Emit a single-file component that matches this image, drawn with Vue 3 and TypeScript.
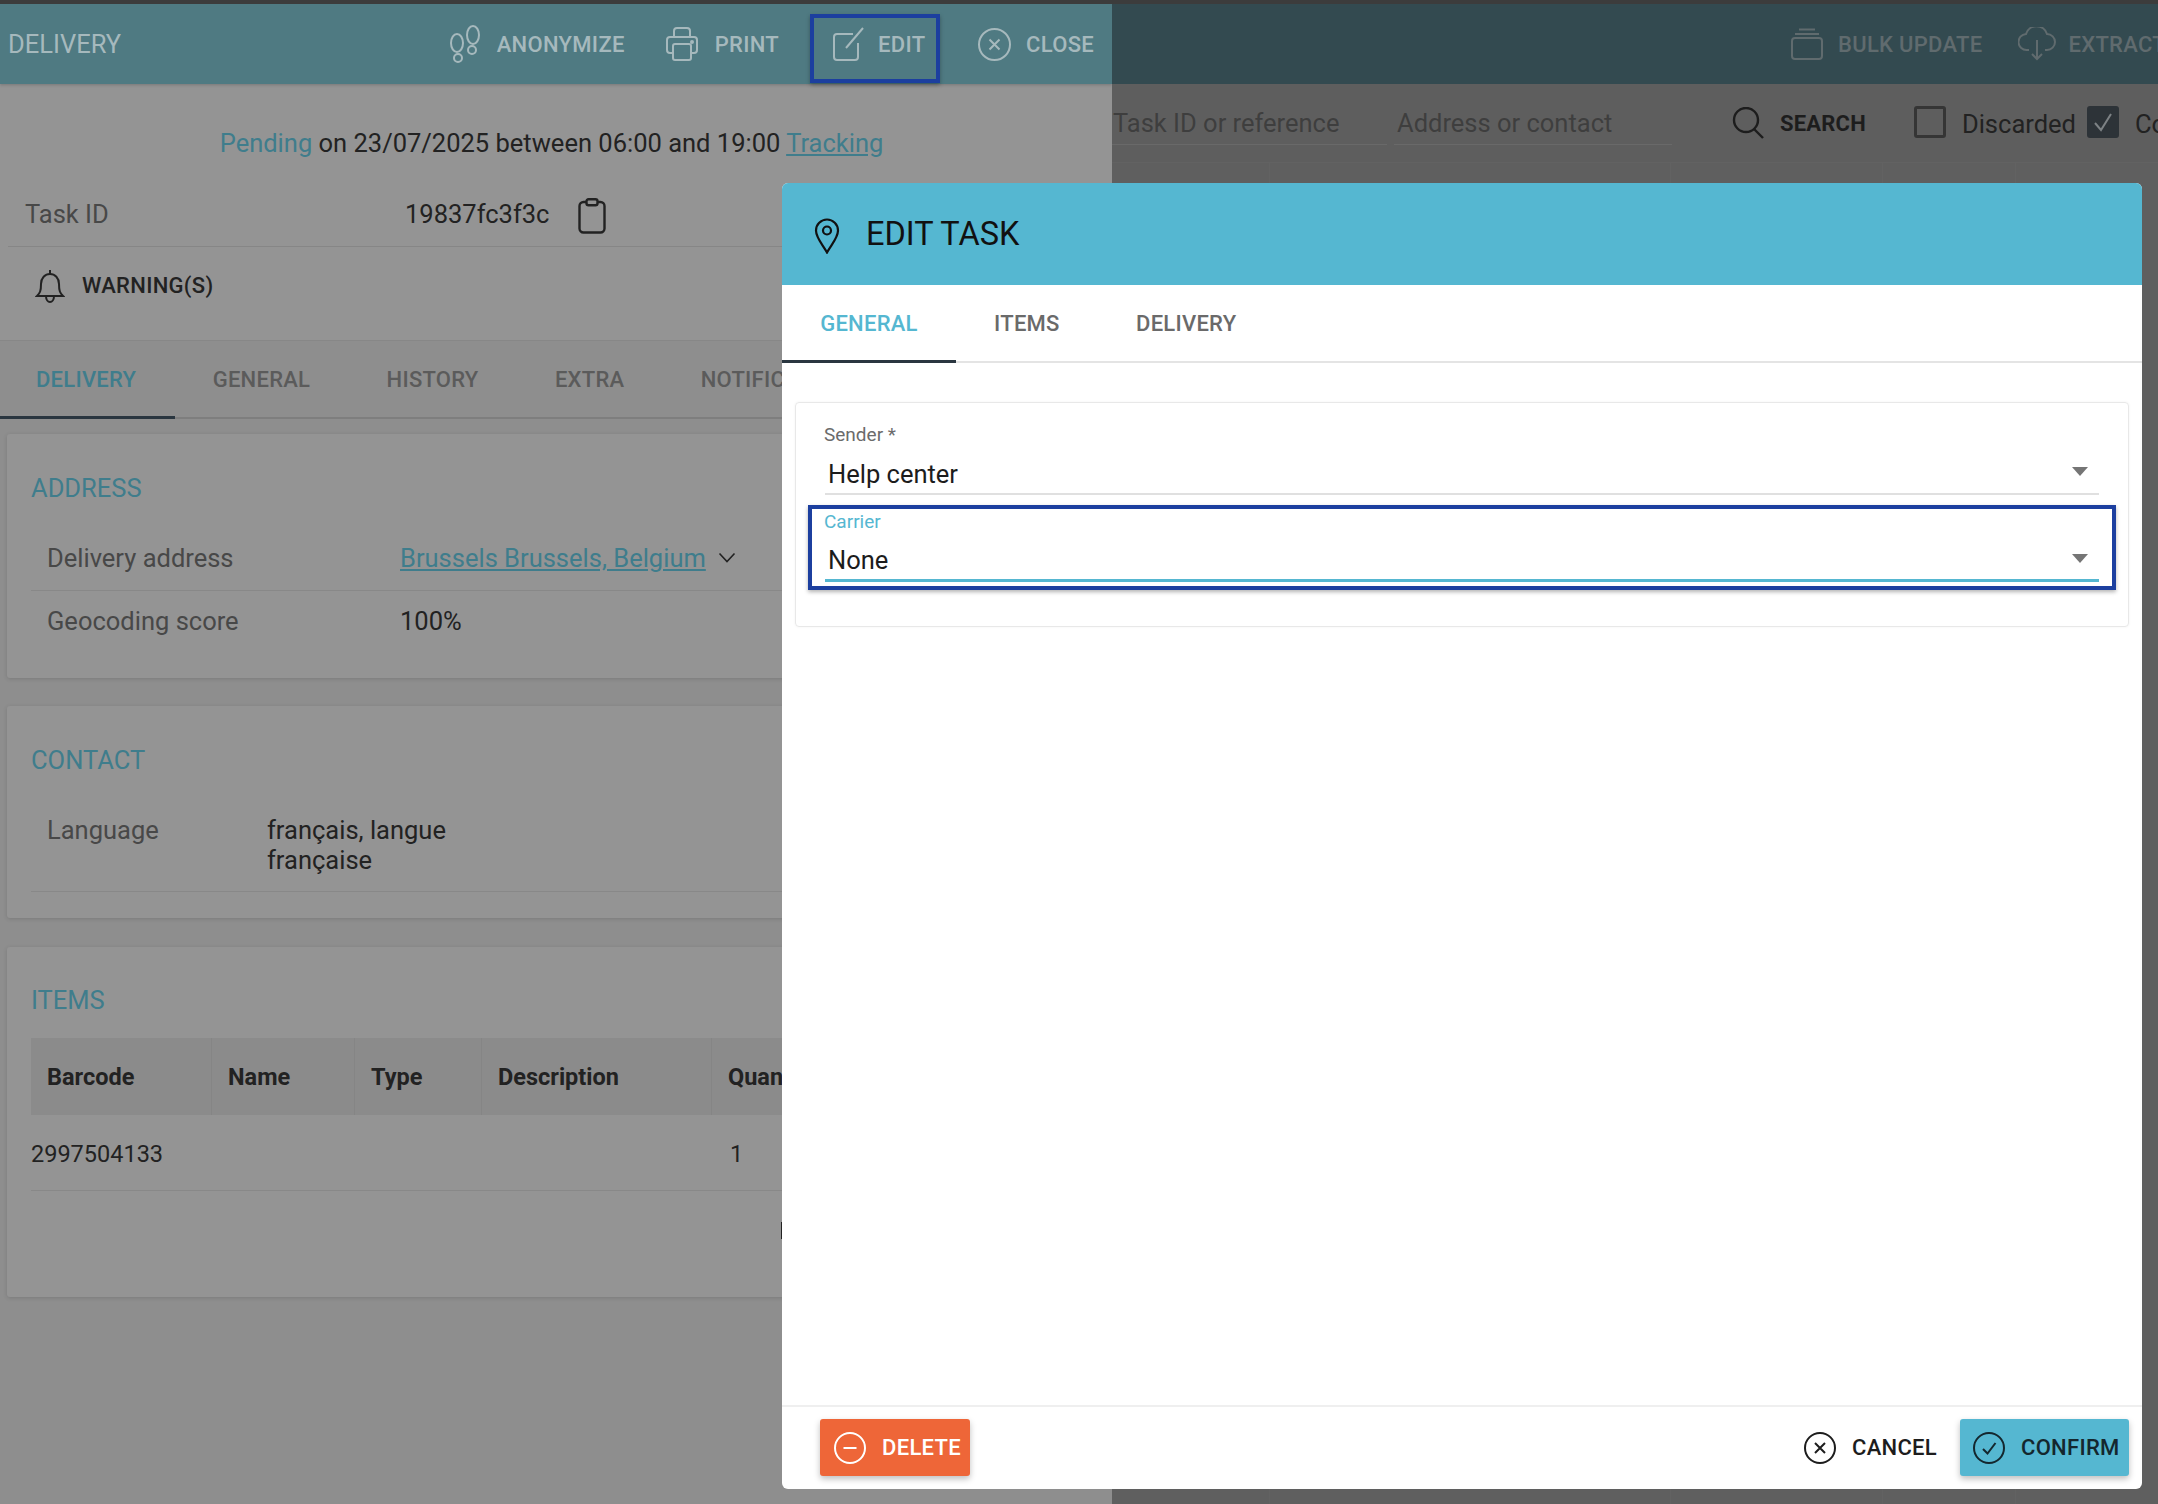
<script setup lang="ts">
interface Row {
  label: string
  value: string
}

const detailTabs = ['DELIVERY', 'GENERAL', 'HISTORY', 'EXTRA', 'NOTIFICATIONS']
const modalTabs = ['GENERAL', 'ITEMS', 'DELIVERY']
const tableHead = [
  { name: 'Barcode', width: 181 },
  { name: 'Name', width: 143 },
  { name: 'Type', width: 127 },
  { name: 'Description', width: 230 },
  { name: 'Quantity', width: 120 },
]
const filterColumns = [1269, 1670, 1882, 2015]
const address: Row = { label: 'Delivery address', value: 'Brussels Brussels, Belgium' }
</script>

<template>
  <div class="page">
    <div class="strip"></div>
    <div class="columns">
      <section class="detail">
        <header class="bar detail-bar">
          <span class="bar-title">DELIVERY</span>
          <div class="tools">
            <span class="tool tool-anon">
              <svg width="34" height="38" viewBox="0 0 34 38" fill="none" stroke="currentColor" stroke-width="2">
                <ellipse cx="9" cy="18" rx="6" ry="9" />
                <ellipse cx="10" cy="33" rx="4" ry="4" />
                <ellipse cx="25" cy="10" rx="6" ry="9" />
                <ellipse cx="24" cy="25" rx="4" ry="4" />
              </svg>
              ANONYMIZE
            </span>
            <span class="tool tool-print">
              <svg width="32" height="34" viewBox="0 0 32 34" fill="none" stroke="currentColor" stroke-width="2">
                <path d="M8 10V4a3 3 0 0 1 3-3h10a3 3 0 0 1 3 3v6" />
                <path d="M7 26H4a3 3 0 0 1-3-3V13a3 3 0 0 1 3-3h24a3 3 0 0 1 3 3v10a3 3 0 0 1-3 3h-3" />
                <rect x="7" y="17" width="18" height="16" rx="2" />
                <circle cx="26" cy="15" r="1" fill="currentColor" />
              </svg>
              PRINT
            </span>
            <span class="tool tool-edit">
              <svg width="32" height="34" viewBox="0 0 32 34" fill="none" stroke="currentColor" stroke-width="2">
                <path d="M20 7H4a3 3 0 0 0-3 3v20a3 3 0 0 0 3 3h18a3 3 0 0 0 3-3V16" />
                <path d="M13 21 30 1" />
              </svg>
              EDIT
            </span>
            <span class="tool tool-close">
              <svg width="33" height="33" viewBox="0 0 33 33" fill="none" stroke="currentColor" stroke-width="2">
                <circle cx="16.5" cy="16.5" r="15.5" />
                <path d="m11.5 11.5 10 10m0-10-10 10" />
              </svg>
              CLOSE
            </span>
          </div>
        </header>

        <p class="status">
          <span class="accent">Pending</span> on 23/07/2025 between 06:00 and 19:00
          <a class="link">Tracking</a>
        </p>

        <div class="id-row">
          <span class="muted id-label">Task ID</span>
          <span class="id-value">19837fc3f3c</span>
          <svg class="clip" width="28" height="36" viewBox="0 0 28 36" fill="none" stroke="#222" stroke-width="2.4">
            <rect x="1.5" y="4" width="25" height="30.5" rx="4" />
            <rect x="8.5" y="1.2" width="11" height="6" rx="2" fill="#949494" />
          </svg>
        </div>

        <div class="warning-row">
          <svg width="30" height="34" viewBox="0 0 30 34" fill="none" stroke="#222" stroke-width="2">
            <path d="M2 27c3-3 4-5 4-12 0-6 4-10 9-10s9 4 9 10c0 7 1 9 4 12z" />
            <path d="M15 1v4M11 27c0 8 8 8 8 0" />
          </svg>
          <span>WARNING(S)</span>
        </div>

        <div class="detail-body">
          <nav class="tabs detail-tabs">
            <span
              v-for="(tab, index) in detailTabs"
              :key="tab"
              :class="['tab', { active: index === 0 }]"
            >{{ tab }}</span>
          </nav>

          <div class="card address-card">
            <h3 class="card-title">ADDRESS</h3>
            <div class="info-row">
              <span class="muted info-label">{{ address.label }}</span>
              <a class="link">{{ address.value }}</a>
              <svg class="chevron" width="18" height="12" viewBox="0 0 18 12" fill="none" stroke="#222" stroke-width="1.6">
                <path d="m1.5 1.5 7.5 8 7.5-8" />
              </svg>
            </div>
            <div class="info-row plain">
              <span class="muted info-label">Geocoding score</span>
              <span>100%</span>
            </div>
          </div>

          <div class="card contact-card">
            <h3 class="card-title">CONTACT</h3>
            <div class="info-row contact-row">
              <span class="muted lang-label">Language</span>
              <span class="lang-value">français, langue française</span>
            </div>
          </div>

          <div class="card items-card">
            <h3 class="card-title">ITEMS</h3>
            <div class="table-head">
              <span
                v-for="col in tableHead"
                :key="col.name"
                class="head-cell"
                :style="{ width: col.width + 'px' }"
              >{{ col.name }}</span>
            </div>
            <div class="table-row">
              <span class="barcode">2997504133</span>
              <span>1</span>
            </div>
            <div class="pager"><span></span></div>
          </div>
        </div>
      </section>

      <section class="list">
        <header class="bar list-bar">
          <span class="tool tool-bulk">
            <svg width="32" height="32" viewBox="0 0 32 32" fill="none" stroke="currentColor" stroke-width="2">
              <rect x="1" y="10" width="30" height="21" rx="3" />
              <path d="M4 6h24M8 1.500h16" />
            </svg>
            BULK UPDATE
          </span>
          <span class="tool tool-extract">
            <svg width="38" height="34" viewBox="0 0 38 34" fill="none" stroke="currentColor" stroke-width="2">
              <path d="M11 23H9a8 8 0 0 1-1-16 11 11 0 0 1 21 0 8 8 0 0 1 0 16h-2" />
              <path d="M19 13v19m-5-5 5 5 5-5" />
            </svg>
            EXTRACT
          </span>
        </header>
        <div class="filters">
          <span class="filter filter-id">Task ID or reference</span>
          <span class="filter filter-address">Address or contact</span>
          <span class="search">
            <svg width="33" height="32" viewBox="0 0 33 32" fill="none" stroke="#1d1d1d" stroke-width="2.400">
              <circle cx="14" cy="13" r="12" />
              <path d="m22 22 9 9" />
            </svg>
            SEARCH
          </span>
          <span class="check"></span>
          <span class="check-label">Discarded</span>
          <span class="check checked">
            <svg width="22" height="22" viewBox="0 0 22 22" fill="none" stroke="#7d8285" stroke-width="2">
              <path d="m3 12 6 7L19 3" />
            </svg>
          </span>
          <span class="check-label cut">Completed</span>
        </div>
        <div class="list-table">
          <i
            v-for="x in filterColumns"
            :key="x"
            class="col-line"
            :style="{ left: x - 1112 + 'px' }"
          ></i>
        </div>
      </section>
    </div>

    <div class="modal">
      <header class="modal-head">
        <svg width="26" height="36" viewBox="0 0 26 36" fill="none" stroke="#111" stroke-width="2.200">
          <path d="M13 34.500C9 27 2 20 2 12.500a11 11 0 0 1 22 0C24 20 17 27 13 34.500z" />
          <circle cx="13" cy="12.500" r="4" />
        </svg>
        <h2>EDIT TASK</h2>
      </header>
      <nav class="tabs modal-tabs">
        <span
          v-for="(tab, index) in modalTabs"
          :key="tab"
          :class="['tab', { active: index === 0 }]"
        >{{ tab }}</span>
      </nav>
      <div class="modal-body">
        <div class="form-card">
          <div class="field">
            <label>Sender *</label>
            <div class="select">
              <span>Help center</span>
              <i class="caret"></i>
            </div>
          </div>
          <div class="field focused">
            <label>Carrier</label>
            <div class="select">
              <span>None</span>
              <i class="caret"></i>
            </div>
            <div class="highlight"></div>
          </div>
        </div>
      </div>
      <footer class="modal-foot">
        <button class="btn btn-delete">
          <svg width="32" height="32" viewBox="0 0 32 32" fill="none" stroke="#fff" stroke-width="2">
            <circle cx="16" cy="16" r="15" />
            <path d="M9.500 16h13" />
          </svg>
          DELETE
        </button>
        <button class="btn btn-cancel">
          <svg width="32" height="32" viewBox="0 0 32 32" fill="none" stroke="#1d1d1d" stroke-width="2">
            <circle cx="16" cy="16" r="15" />
            <path d="m11 11 10 10m0-10L11 21" />
          </svg>
          CANCEL
        </button>
        <button class="btn btn-confirm">
          <svg width="32" height="32" viewBox="0 0 32 32" fill="none" stroke="#14272e" stroke-width="2">
            <circle cx="16" cy="16" r="15" />
            <path d="m10 17 4.500 4.500L22.500 11" />
          </svg>
          CONFIRM
        </button>
      </footer>
    </div>
  </div>
</template>

<style scoped>
.page {
  position: relative;
  width: 2158px;
  height: 1504px;
  overflow: hidden;
  display: flex;
  flex-direction: column;
  font-family: Roboto, "Liberation Sans", sans-serif;
  font-size: 25.5px;
  color: #222;
  background: #5e5e5e;
}

.strip {
  height: 4px;
  background: #3c3c3c;
}

.columns {
  flex: 1;
  display: flex;
  min-height: 0;
}

.detail {
  width: 1112px;
  flex: none;
  display: flex;
  flex-direction: column;
  background: #949494;
  overflow: hidden;
}

.bar {
  height: 80px;
  flex: none;
  display: flex;
  align-items: center;
}

.detail-bar {
  justify-content: space-between;
  padding: 0 18px 0 8px;
  background: #4f7a82;
  color: #a6b9bd;
  box-shadow: 0 1px 3px rgba(0, 0, 0, 0.2);
}

.tools {
  display: flex;
  align-items: center;
}

.tool {
  display: inline-flex;
  align-items: center;
  gap: 15px;
  font-size: 22px;
  font-weight: 500;
  letter-spacing: 0.3px;
}

.tool-print {
  margin-left: 41px;
  gap: 17px;
}

.tool-edit {
  margin-left: 31px;
  margin-top: 9px;
  width: 130px;
  height: 69px;
  padding: 0 0 9px 19px;
  gap: 13px;
  border: 4px solid #1c3f9f;
  box-sizing: border-box;
  box-shadow: 0 2px 4px rgba(0, 0, 0, 0.3);
}

.tool-close {
  margin-left: 38px;
}

.status {
  margin: 0;
  height: 118px;
  flex: none;
  box-sizing: border-box;
  padding-top: 41px;
  padding-right: 9px;
  line-height: 36px;
  text-align: center;
}

.accent {
  color: #3f7d8c;
}

.link {
  color: #3f7d8c;
  text-decoration: underline;
}

.muted {
  color: #484848;
}

.id-row {
  height: 45px;
  flex: none;
  display: flex;
  align-items: center;
  margin-left: 8px;
  padding-left: 17px;
  padding-bottom: 20px;
  border-bottom: 1px solid #868686;
  box-sizing: border-box;
}

.id-label {
  width: 380px;
}

.clip {
  margin-left: 29px;
  margin-top: 4px;
}

.warning-row {
  height: 93px;
  flex: none;
  display: flex;
  align-items: center;
  gap: 17px;
  padding-left: 35px;
  padding-bottom: 16px;
  box-sizing: border-box;
  font-size: 22px;
  font-weight: 500;
  letter-spacing: 0.3px;
}

.detail-body {
  flex: 1;
  background: #8e8e8e;
  border-top: 1px solid #878787;
}

.tabs {
  display: flex;
  box-sizing: border-box;
}

.tab {
  display: flex;
  align-items: center;
  padding: 0 38.2px;
  font-size: 22px;
  font-weight: 500;
  letter-spacing: 0.25px;
  white-space: nowrap;
  color: #5b5b5b;
}

.detail-tabs {
  height: 78px;
  border-bottom: 2px solid #7e7e7e;
}

.detail-tabs .tab {
  margin-bottom: -2px;
  padding-bottom: 2px;
}

.detail-tabs .tab:first-child {
  padding-left: 36px;
}

.detail-tabs .tab.active {
  color: #3f7d8c;
  box-shadow: inset 0 -3px 0 #2a3640;
}

.card {
  margin: 15px 0 0 7px;
  padding: 0 0 0 24px;
  background: #949494;
  border-radius: 3px;
  box-shadow: 0 1px 4px rgba(0, 0, 0, 0.14);
  box-sizing: border-box;
}

.card-title {
  margin: 0;
  padding-top: 36px;
  font-size: 25.5px;
  line-height: 36px;
  font-weight: 400;
  color: #3f7d8c;
}

.address-card {
  height: 244px;
}

.contact-card {
  height: 212px;
  margin-top: 28px;
}

.items-card {
  height: 350px;
  margin-top: 29px;
}

.items-card .card-title {
  padding-top: 35px;
}

.info-row {
  display: flex;
  align-items: center;
  height: 51px;
  margin-top: 34px;
  padding-left: 16px;
  padding-bottom: 14px;
  box-sizing: border-box;
  border-bottom: 1px solid #888;
}

.info-row.plain {
  height: 60px;
  margin-top: 0;
  padding-bottom: 0;
  border-bottom: 0;
}

.info-label {
  width: 353px;
}

.chevron {
  margin-left: 12px;
}

.contact-row {
  height: 77px;
  margin-top: 37px;
  padding-bottom: 0;
  align-items: flex-start;
  line-height: 30px;
}

.lang-label {
  width: 220px;
}

.lang-value {
  width: 220px;
}

.table-head {
  display: flex;
  height: 77px;
  margin-top: 20px;
  background: #8b8b8b;
}

.head-cell {
  flex: none;
  box-sizing: border-box;
  display: flex;
  align-items: center;
  padding-left: 16px;
  font-size: 23.5px;
  font-weight: 700;
  border-right: 1px solid #858585;
}

.table-row {
  display: flex;
  align-items: center;
  height: 76px;
  padding-top: 2px;
  box-sizing: border-box;
  border-bottom: 1px solid #888;
  font-size: 23.5px;
}

.barcode {
  width: 699px;
}

.pager {
  padding: 31px 0 0 750px;
}

.pager span {
  display: block;
  width: 6px;
  height: 17px;
  background: #222;
}

.list {
  flex: 1;
  min-width: 0;
  display: flex;
  flex-direction: column;
  overflow: hidden;
}

.list-bar {
  gap: 36px;
  padding-left: 679px;
  background: #334a50;
  color: #606b6e;
  white-space: nowrap;
}

.tool-extract {
  gap: 12px;
}

.filters {
  height: 78px;
  flex: none;
  display: flex;
  align-items: flex-start;
  white-space: nowrap;
  border-bottom: 1px solid #626262;
}

.filter {
  height: 61px;
  flex: none;
  box-sizing: border-box;
  padding: 21px 0 0 1px;
  border-bottom: 1px solid #696969;
  color: #3e3e3e;
  line-height: 36px;
}

.filter-id {
  width: 275px;
}

.filter-address {
  width: 278px;
  margin-left: 7px;
  padding-left: 3px;
}

.search {
  display: flex;
  align-items: center;
  gap: 15px;
  margin: 23px 0 0 60px;
  font-size: 22px;
  font-weight: 700;
  letter-spacing: 0.2px;
  color: #1d1d1d;
}

.check {
  flex: none;
  width: 32px;
  height: 32px;
  margin: 22px 0 0 48px;
  box-sizing: border-box;
  border: 3px solid #353535;
  border-radius: 3px;
}

.check.checked {
  display: flex;
  align-items: center;
  justify-content: center;
  margin-left: 11px;
  background: #2d3338;
  border-color: #2d3338;
}

.check-label {
  margin: 22px 0 0 16px;
  line-height: 36px;
}

.list-table {
  position: relative;
  flex: 1;
  background: #5f5f5f;
}

.col-line {
  position: absolute;
  top: 0;
  bottom: 0;
  width: 1px;
  background: #626262;
}

.modal {
  position: absolute;
  top: 183px;
  left: 782px;
  width: 1360px;
  height: 1306px;
  display: flex;
  flex-direction: column;
  overflow: hidden;
  background: #fff;
  border-radius: 6px;
}

.modal-head {
  height: 102px;
  flex: none;
  display: flex;
  align-items: center;
  gap: 26px;
  padding-left: 32px;
  background: #55b7d1;
  color: #111;
}

.modal-head svg {
  margin-top: 4px;
}

.modal-head h2 {
  margin: 0;
  font-size: 32.5px;
  line-height: 36px;
  font-weight: 400;
}

.modal-tabs {
  height: 78px;
  flex: none;
  border-bottom: 2px solid #e4e4e4;
}

.modal-tabs .tab {
  margin-bottom: -2px;
  padding-bottom: 2px;
  color: #6a6a6a;
}

.modal-tabs .tab.active {
  color: #55b7d1;
  box-shadow: inset 0 -3px 0 #2a3640;
}

.modal-body {
  flex: 1;
  padding: 39px 13px 0;
}

.form-card {
  height: 225px;
  box-sizing: border-box;
  padding: 22px 29px 0;
  border: 1px solid #e8e8e8;
  border-radius: 4px;
  box-shadow: 0 0 3px rgba(0, 0, 0, 0.05);
}

.field {
  position: relative;
  height: 70px;
}

.field.focused {
  margin-top: 16px;
}

.field label {
  display: block;
  margin-left: -1px;
  font-size: 19px;
  line-height: 20px;
  color: #6b6b6b;
}

.focused label {
  padding-top: 1px;
  color: #55b7d1;
}

.select {
  display: flex;
  align-items: center;
  justify-content: space-between;
  height: 39px;
  margin-top: 9px;
  padding: 0 11px 0 3px;
  border-bottom: 2px solid #e0e0e0;
  color: #1c1c1c;
}

.focused .select {
  height: 38px;
  margin-top: 9px;
  border-bottom: 3px solid #55b7d1;
}

.caret {
  width: 0;
  height: 0;
  margin-top: -4px;
  border-left: 8.5px solid transparent;
  border-right: 8.5px solid transparent;
  border-top: 9px solid #757575;
}

.highlight {
  position: absolute;
  top: -6px;
  left: -17px;
  right: -17px;
  height: 85px;
  box-sizing: border-box;
  border: 4px solid #1c3f9f;
  box-shadow: 0 2px 4px rgba(0, 0, 0, 0.3);
  pointer-events: none;
}

.modal-foot {
  height: 84px;
  flex: none;
  box-sizing: border-box;
  display: flex;
  align-items: flex-start;
  padding: 12px 13px 0 38px;
  border-top: 2px solid #efefef;
}

.btn {
  height: 57px;
  display: inline-flex;
  align-items: center;
  gap: 16px;
  padding: 0;
  border: 0;
  border-radius: 3px;
  background: none;
  font-family: inherit;
  font-size: 22px;
  font-weight: 500;
  letter-spacing: 0.3px;
  white-space: nowrap;
}

.btn-delete {
  width: 150px;
  padding-left: 14px;
  background: #ee6638;
  color: #fff;
  box-shadow: 0 3px 6px rgba(0, 0, 0, 0.25);
}

.btn-cancel {
  margin-left: auto;
  margin-right: 23px;
  color: #1d1d1d;
}

.btn-confirm {
  width: 169px;
  padding-left: 13px;
  background: #55b7d1;
  color: #14272e;
  box-shadow: 0 3px 6px rgba(0, 0, 0, 0.25);
}
</style>
